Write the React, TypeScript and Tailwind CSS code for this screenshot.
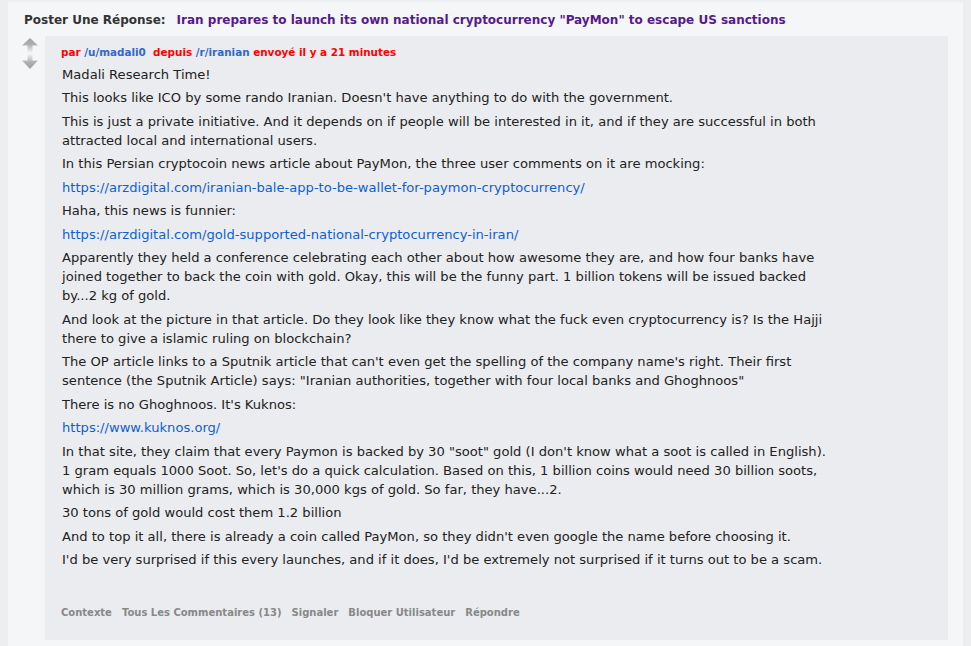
import React from "react";

const F = { fontFamily: '"DejaVu Sans", Verdana, sans-serif' };

function Arrows() {
  return (
    <svg width="18" height="32" viewBox="0 0 18 32" className="block">
      <defs>
        <linearGradient id="up" x1="0" y1="0" x2="0" y2="1">
          <stop offset="0" stopColor="#a0a0a0" />
          <stop offset="0.45" stopColor="#b0b0b0" />
          <stop offset="1" stopColor="#f4f4f4" />
        </linearGradient>
        <linearGradient id="dn" x1="0" y1="0" x2="0" y2="1">
          <stop offset="0" stopColor="#f4f4f4" />
          <stop offset="0.55" stopColor="#b0b0b0" />
          <stop offset="1" stopColor="#a0a0a0" />
        </linearGradient>
      </defs>
      <path d="M9 0 L17 7.5 L11.5 7.5 L11.5 14.5 L6.5 14.5 L6.5 7.5 L1 7.5 Z" fill="url(#up)" />
      <path d="M6.5 16 L11.5 16 L11.5 22.5 L17 22.5 L9 31 L1 22.5 L6.5 22.5 Z" fill="url(#dn)" />
    </svg>
  );
}

const P = ({ children }: { children: React.ReactNode }) => (
  <p className="mb-[4.5px] whitespace-nowrap leading-[19px]">{children}</p>
);

const L = ({ href }: { href: string }) => (
  <P>
    <a className="text-[#0b5fd6]">{href}</a>
  </P>
);

export default function App() {
  return (
    <div className="min-h-screen w-full bg-[#edeef0] pt-[2px] pl-[8px]" style={F}>
      <div className="w-[955px] min-h-[644px] bg-[#f5f6f8] flex flex-col">
        <div className="pl-[16px] pt-[10.5px] h-[34px] text-[12px] font-bold leading-[15px] flex gap-[11px]">
          <span className="text-[#333]">Poster Une Réponse:</span>
          <span className="text-[#551a8b]">Iran prepares to launch its own national cryptocurrency "PayMon" to escape US sanctions</span>
        </div>
        <div className="flex">
          <div className="w-[37px] pl-[13px] pt-[2px]">
            <Arrows />
          </div>
          <div className="w-[903px] h-[604px] bg-[#ebecef] pl-[16px] pt-[9.5px] flex flex-col">
            <div className="text-[10.4px] font-bold leading-[13px] text-[#ff0000]">
              par <span className="text-[#3168c9]">/u/madali0</span>&nbsp; depuis{" "}
              <span className="text-[#3168c9]">/r/iranian</span> envoyé il y a 21 minutes
            </div>
            <div className="pl-[1px] pt-[6px] text-[13.1px] text-[#222]">
              <P>Madali Research Time!</P>
              <P>This looks like ICO by some rando Iranian. Doesn't have anything to do with the government.</P>
              <P>
                This is just a private initiative. And it depends on if people will be interested in it, and if they are successful in both
                <br />
                attracted local and international users.
              </P>
              <P>In this Persian cryptocoin news article about PayMon, the three user comments on it are mocking:</P>
              <L href="https://arzdigital.com/iranian-bale-app-to-be-wallet-for-paymon-cryptocurrency/" />
              <P>Haha, this news is funnier:</P>
              <L href="https://arzdigital.com/gold-supported-national-cryptocurrency-in-iran/" />
              <P>
                Apparently they held a conference celebrating each other about how awesome they are, and how four banks have
                <br />
                joined together to back the coin with gold. Okay, this will be the funny part. 1 billion tokens will be issued backed
                <br />
                by...2 kg of gold.
              </P>
              <P>
                And look at the picture in that article. Do they look like they know what the fuck even cryptocurrency is? Is the Hajji
                <br />
                there to give a islamic ruling on blockchain?
              </P>
              <P>
                The OP article links to a Sputnik article that can't even get the spelling of the company name's right. Their first
                <br />
                sentence (the Sputnik Article) says: "Iranian authorities, together with four local banks and Ghoghnoos"
              </P>
              <P>There is no Ghoghnoos. It's Kuknos:</P>
              <L href="https://www.kuknos.org/" />
              <P>
                In that site, they claim that every Paymon is backed by 30 "soot" gold (I don't know what a soot is called in English).
                <br />
                1 gram equals 1000 Soot. So, let's do a quick calculation. Based on this, 1 billion coins would need 30 billion soots,
                <br />
                which is 30 million grams, which is 30,000 kgs of gold. So far, they have...2.
              </P>
              <P>30 tons of gold would cost them 1.2 billion</P>
              <P>And to top it all, there is already a coin called PayMon, so they didn't even google the name before choosing it.</P>
              <P>I'd be very surprised if this every launches, and if it does, I'd be extremely not surprised if it turns out to be a scam.</P>
            </div>
            <div className="mt-[32px] flex gap-[10px] text-[10px] font-bold leading-[13px] text-[#888]">
              <span>Contexte</span>
              <span>Tous Les Commentaires (13)</span>
              <span>Signaler</span>
              <span>Bloquer Utilisateur</span>
              <span>Répondre</span>
            </div>
          </div>
        </div>
      </div>
    </div>
  );
}
